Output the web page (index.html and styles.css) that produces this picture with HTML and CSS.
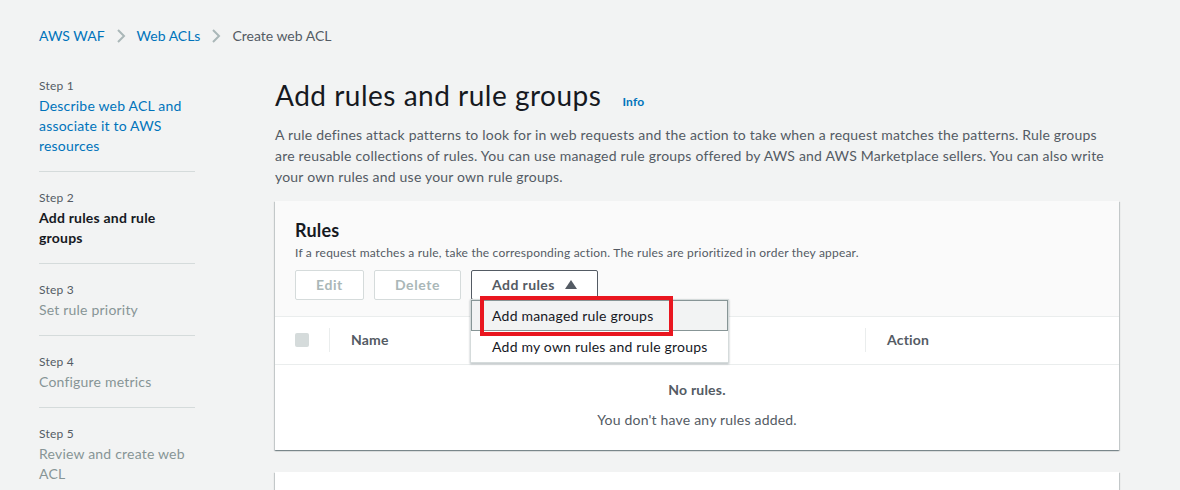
FILE: index.html
```html
<!DOCTYPE html>
<html lang="en">
<head>
<meta charset="utf-8">
<title>Create web ACL</title>
<link rel="stylesheet" href="styles.css">
</head>
<body>
<div class="page">
  <nav class="breadcrumb">
    <a class="crumb-link" href="#">AWS WAF</a>
    <svg class="chev" width="10" height="14" viewBox="0 0 10 14"><polyline points="2,1 8,7 2,13" fill="none" stroke="#aab7b8" stroke-width="2"/></svg>
    <a class="crumb-link" href="#">Web ACLs</a>
    <svg class="chev" width="10" height="14" viewBox="0 0 10 14"><polyline points="2,1 8,7 2,13" fill="none" stroke="#aab7b8" stroke-width="2"/></svg>
    <span class="crumb-current">Create web ACL</span>
  </nav>

  <div class="layout">
    <ol class="steps">
      <li class="step">
        <div class="step-label">Step 1</div>
        <a class="step-text link" href="#">Describe web ACL and associate it to AWS resources</a>
      </li>
      <li class="step">
        <div class="step-label">Step 2</div>
        <div class="step-text active">Add rules and rule groups</div>
      </li>
      <li class="step">
        <div class="step-label">Step 3</div>
        <div class="step-text disabled">Set rule priority</div>
      </li>
      <li class="step">
        <div class="step-label">Step 4</div>
        <div class="step-text disabled">Configure metrics</div>
      </li>
      <li class="step">
        <div class="step-label">Step 5</div>
        <div class="step-text disabled">Review and create web ACL</div>
      </li>
    </ol>

    <main class="main">
      <div class="title-row">
        <h1 class="title">Add rules and rule groups</h1>
        <a class="info" href="#">Info</a>
      </div>
      <p class="desc">A rule defines attack patterns to look for in web requests and the action to take when a request matches the patterns. Rule groups are reusable collections of rules. You can use managed rule groups offered by AWS and AWS Marketplace sellers. You can also write your own rules and use your own rule groups.</p>

      <section class="panel">
        <div class="panel-header">
          <h2 class="panel-title">Rules</h2>
          <div class="panel-sub">If a request matches a rule, take the corresponding action. The rules are prioritized in order they appear.</div>
          <div class="actions">
            <button class="btn btn-disabled">Edit</button>
            <button class="btn btn-disabled">Delete</button>
            <div class="dd-wrap">
              <button class="btn btn-normal">Add rules
                <svg class="caret" width="12" height="9" viewBox="0 0 12 9"><polygon points="6,0 12,9 0,9" fill="#545b64"/></svg>
              </button>
              <ul class="menu">
                <li class="menu-item hover">Add managed rule groups</li>
                <li class="menu-item">Add my own rules and rule groups</li>
              </ul>
              <div class="highlight"></div>
            </div>
          </div>
        </div>
        <div class="table-head">
          <div class="col col-check"><span class="checkbox"></span></div>
          <div class="col col-name">Name</div>
          <div class="col col-action">Action</div>
        </div>
        <div class="empty">
          <div class="empty-title">No rules.</div>
          <div class="empty-text">You don't have any rules added.</div>
        </div>
      </section>

      <section class="panel panel-next"></section>
    </main>
  </div>
</div>
</body>
</html>
```

FILE: styles.css
```css
* { box-sizing: border-box; }
html, body { margin: 0; padding: 0; }
body {
  background: #f2f3f3;
  font-family: Lato, "Open Sans", sans-serif;
  font-size: 14px;
  letter-spacing: 0.2px;
  color: #16191f;
  overflow: hidden;
}
a { text-decoration: none; }

.page { padding: 0 61px 0 39px; }

.breadcrumb {
  display: flex;
  align-items: center;
  gap: 11px;
  padding-top: 25px;
  height: 46px;
  line-height: 20px;
  font-size: 14px;
  letter-spacing: 0;
}
.crumb-link { color: #0073bb; }
.crumb-current { color: #545b64; }
.chev { display: block; }

.layout {
  display: grid;
  grid-template-columns: 156px 1fr;
  column-gap: 80px;
  margin-top: 32px;
}

.steps { list-style: none; margin: 0; padding: 0; }
.step {
  padding: 18px 0 15px;
  border-bottom: 1px solid #d5dbdb;
}
.step:first-child { padding-top: 0; }
.step:last-child { border-bottom: 0; }
.step-label {
  font-size: 12px;
  line-height: 16px;
  color: #545b64;
}
.step-text {
  display: block;
  margin-top: 2px;
  font-size: 14px;
  line-height: 20px;
}
.step-text.link { color: #0073bb; }
.step-text.active { font-weight: 700; color: #16191f; }
.step-text.disabled { color: #879596; }

.main { min-width: 0; }
.title-row { display: flex; align-items: baseline; gap: 21px; }
.title {
  margin: 0;
  font-size: 28px;
  line-height: 34px;
  font-weight: 400;
  letter-spacing: 0.5px;
  color: #16191f;
}
.info {
  font-size: 12px;
  font-weight: 700;
  color: #0073bb;
}
.desc {
  margin: 12px 0 14px;
  font-size: 14px;
  line-height: 21px;
  color: #545b64;
}

.panel {
  background: #fff;
  box-shadow: 0 1px 1px 0 rgba(0, 28, 36, 0.3), 1px 1px 1px 0 rgba(0, 28, 36, 0.15), -1px 1px 1px 0 rgba(0, 28, 36, 0.15);
}
.panel-header {
  background: #fafafa;
  padding: 18px 20px 16px;
  border-bottom: 1px solid #eaeded;
}
.panel-title {
  margin: 0;
  font-size: 18px;
  line-height: 22px;
  font-weight: 700;
  color: #16191f;
}
.panel-sub {
  margin-top: 4px;
  font-size: 12px;
  line-height: 16px;
  color: #545b64;
}
.actions {
  display: flex;
  gap: 10px;
  margin-top: 9px;
}
.btn {
  height: 30px;
  padding: 0 20px;
  border-radius: 2px;
  background: #fff;
  font-family: inherit;
  font-size: 14px;
  font-weight: 700;
  letter-spacing: 0.6px;
  line-height: 28px;
  display: flex;
  align-items: center;
  gap: 10px;
}
.btn-disabled {
  border: 1px solid #d5dbdb;
  color: #aab7b8;
}
.btn-normal {
  border: 1px solid #545b64;
  color: #545b64;
  letter-spacing: 0.4px;
}
.caret { display: block; margin-top: -1px; }

.dd-wrap { position: relative; }
.menu {
  position: absolute;
  top: 29px;
  left: -1px;
  width: 259px;
  margin: 0;
  padding: 0;
  list-style: none;
  background: #fff;
  border: 1px solid #d5dbdb;
  box-shadow: 0 1px 2px rgba(0, 28, 36, 0.3);
  z-index: 5;
}
.menu-item {
  height: 31px;
  line-height: 29px;
  padding: 0 20px;
  font-size: 14px;
  color: #16191f;
  white-space: nowrap;
  border: 1px solid transparent;
}
.menu-item.hover {
  background: #f2f3f3;
  border-color: #879596;
}
.highlight {
  position: absolute;
  top: 26px;
  left: 9px;
  width: 193px;
  height: 40px;
  border: 4px solid #e9161f;
  z-index: 6;
}

.table-head {
  display: grid;
  grid-template-columns: 54px 536px 1fr;
  height: 48px;
  align-items: center;
  border-bottom: 1px solid #eaeded;
}
.col {
  font-weight: 700;
  color: #545b64;
  line-height: 24px;
  margin-top: -1px;
}
.col-check { padding-left: 20px; display: flex; }
.checkbox {
  width: 14px;
  height: 14px;
  border-radius: 2px;
  background: #d5dbdb;
  display: block;
}
.col-name, .col-action {
  border-left: 1px solid #eaeded;
  padding-left: 21px;
}

.empty {
  padding: 15px 20px 20px;
  text-align: center;
  color: #545b64;
}
.empty-title { font-weight: 700; line-height: 20px; }
.empty-text { margin-top: 10px; line-height: 20px; }

.panel-next {
  margin-top: 22px;
  height: 60px;
}
```
